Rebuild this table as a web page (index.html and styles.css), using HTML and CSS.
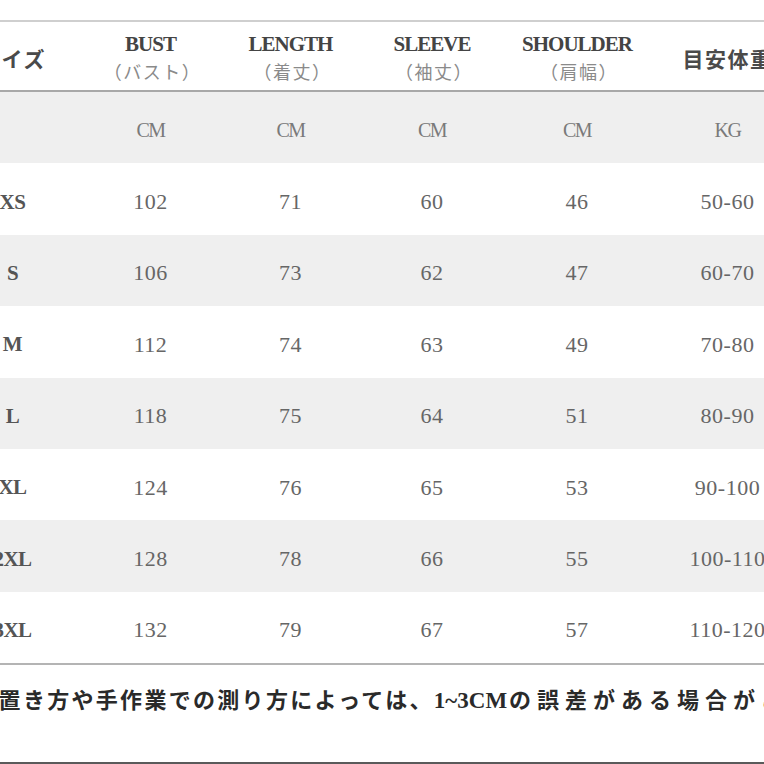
FILE: index.html
```html
<!DOCTYPE html>
<html lang="ja">
<head>
<meta charset="utf-8">
<title>サイズ表</title>
<link rel="stylesheet" href="styles.css">
</head>
<body>
<div class="page">
  <div class="table">
    <div class="row head">
      <div class="cell"><span class="jp-head">サイズ</span></div>
      <div class="cell"><span class="en-head">BUST</span><span class="sub">（バスト）</span></div>
      <div class="cell"><span class="en-head">LENGTH</span><span class="sub">（着丈）</span></div>
      <div class="cell"><span class="en-head">SLEEVE</span><span class="sub">（袖丈）</span></div>
      <div class="cell"><span class="en-head">SHOULDER</span><span class="sub">（肩幅）</span></div>
      <div class="cell"><span class="jp-head">目安体重</span></div>
    </div>
    <div class="row alt unit">
      <div class="cell"></div>
      <div class="cell">CM</div>
      <div class="cell">CM</div>
      <div class="cell">CM</div>
      <div class="cell">CM</div>
      <div class="cell">KG</div>
    </div>
    <div class="row">
      <div class="cell size">XS</div>
      <div class="cell">102</div><div class="cell">71</div><div class="cell">60</div><div class="cell">46</div><div class="cell">50-60</div>
    </div>
    <div class="row alt">
      <div class="cell size">S</div>
      <div class="cell">106</div><div class="cell">73</div><div class="cell">62</div><div class="cell">47</div><div class="cell">60-70</div>
    </div>
    <div class="row">
      <div class="cell size">M</div>
      <div class="cell">112</div><div class="cell">74</div><div class="cell">63</div><div class="cell">49</div><div class="cell">70-80</div>
    </div>
    <div class="row alt">
      <div class="cell size">L</div>
      <div class="cell">118</div><div class="cell">75</div><div class="cell">64</div><div class="cell">51</div><div class="cell">80-90</div>
    </div>
    <div class="row">
      <div class="cell size">XL</div>
      <div class="cell">124</div><div class="cell">76</div><div class="cell">65</div><div class="cell">53</div><div class="cell">90-100</div>
    </div>
    <div class="row alt">
      <div class="cell size">2XL</div>
      <div class="cell">128</div><div class="cell">78</div><div class="cell">66</div><div class="cell">55</div><div class="cell">100-110</div>
    </div>
    <div class="row last">
      <div class="cell size">3XL</div>
      <div class="cell">132</div><div class="cell">79</div><div class="cell">67</div><div class="cell">57</div><div class="cell">110-120</div>
    </div>
  </div>
  <p class="note">※平置き方や手作業での測り方によっては、<span class="latin">1~3CM</span><span class="tail">の誤差がある場合がございます。</span></p>
  <div class="edge"></div>
</div>
</body>
</html>
```

FILE: styles.css
```css
html, body {
  margin: 0;
  padding: 0;
  overflow: hidden;
  background: #ffffff;
}

.page {
  height: 764px;
  display: flex;
  flex-direction: column;
  padding-top: 20px;
  box-sizing: border-box;
  font-family: "Liberation Serif", "Noto Sans CJK JP", serif;
}

.table {
  margin-left: -56px;
  width: 860px;
  border-top: 2px solid #cfcfcf;
  border-bottom: 2px solid #b4b4b4;
}

.row {
  display: grid;
  grid-template-columns: 137px 139px 141px 142px 148px 153px;
  height: 71.4px;
  color: #666666;
  font-size: 22px;
  letter-spacing: 0.5px;
}

.row.alt {
  background: #efefef;
}

.row.head {
  height: 68px;
  border-bottom: 2px solid #a8a8a8;
  background: #ffffff;
}

.cell {
  display: flex;
  flex-direction: column;
  align-items: center;
  justify-content: center;
  padding-top: 6px;
  box-sizing: border-box;
  white-space: nowrap;
}

.head .cell {
  padding-top: 4px;
}

.en-head {
  font-weight: 700;
  font-size: 21px;
  letter-spacing: -1px;
  color: #444444;
  line-height: 27px;
}

.sub {
  font-family: "Noto Sans CJK JP", sans-serif;
  font-size: 18px;
  color: #8a8a8a;
  line-height: 27px;
  letter-spacing: 1.5px;
  padding-left: 4px;
}

.jp-head {
  font-family: "Noto Sans CJK JP", sans-serif;
  font-weight: 700;
  font-size: 21px;
  letter-spacing: 1.5px;
  color: #4a4a4a;
}

.unit .cell {
  font-size: 20px;
  letter-spacing: -1.5px;
  color: #7a7a7a;
}

.size {
  font-weight: 700;
  font-size: 21px;
  letter-spacing: -0.5px;
  color: #555555;
}

.note {
  margin: 16px 0 0 -50px;
  white-space: nowrap;
  line-height: 34px;
  font-family: "Noto Sans CJK JP", sans-serif;
  font-weight: 700;
  font-size: 22px;
  letter-spacing: 2.3px;
  color: #2a2a2a;
}

.note .latin {
  font-family: "Liberation Serif", serif;
  font-weight: 700;
  font-size: 23px;
  letter-spacing: 0;
}

.note .tail {
  letter-spacing: 6px;
  margin-left: 2px;
}

.edge {
  margin-top: auto;
  height: 2px;
  background: #5a5a5a;
}
```
